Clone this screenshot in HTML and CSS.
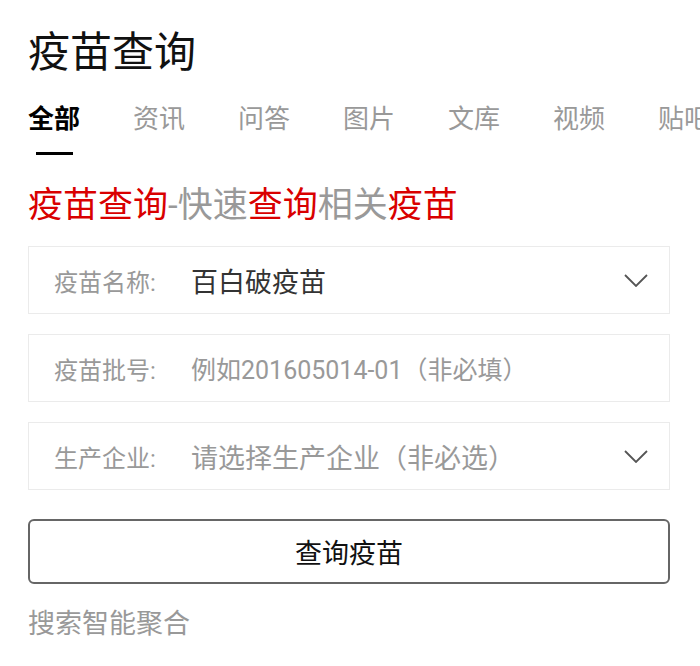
FILE: index.html
```html
<!DOCTYPE html>
<html lang="zh-CN">
<head>
    <meta charset="UTF-8">
    <meta name="viewport" content="width=device-width, initial-scale=1.0">
    <title>疫苗查询</title>
    <link rel="stylesheet" href="styles.css">
</head>
<body>
    <main class="pagina">
        <h1 class="titulo">疫苗查询</h1>

        <nav class="tabs">
            <a class="tab activo">全部<span class="linea"></span></a>
            <a class="tab">资讯</a>
            <a class="tab">问答</a>
            <a class="tab">图片</a>
            <a class="tab">文库</a>
            <a class="tab">视频</a>
            <a class="tab">贴吧</a>
        </nav>

        <h2 class="encabezado">
            <em>疫苗查询</em>-快速<em>查询</em>相关<em>疫苗</em>
        </h2>

        <section class="formulario">
            <div class="campo">
                <span class="etiqueta">疫苗名称:</span>
                <span class="valor">百白破疫苗</span>
                <svg class="flecha" width="24" height="13" viewBox="0 0 24 13">
                    <path d="M1 1 L12 12 L23 1" fill="none" stroke="#555" stroke-width="1.8"/>
                </svg>
            </div>
            <div class="campo">
                <span class="etiqueta">疫苗批号:</span>
                <span class="valor vacio pequeno">例如201605014-01（非必填）</span>
            </div>
            <div class="campo">
                <span class="etiqueta">生产企业:</span>
                <span class="valor vacio">请选择生产企业（非必选）</span>
                <svg class="flecha" width="24" height="13" viewBox="0 0 24 13">
                    <path d="M1 1 L12 12 L23 1" fill="none" stroke="#555" stroke-width="1.8"/>
                </svg>
            </div>
            <button class="boton">查询疫苗</button>
        </section>

        <p class="pie">搜索智能聚合</p>
    </main>
</body>
</html>
```

FILE: styles.css
```css
body {
    margin: 0;
    background-color: #fff;
    font-family: Roboto, "Noto Sans CJK SC", sans-serif;
    overflow: hidden;
}
.pagina {
    padding: 28px 30px 0 28px;
}
.titulo {
    margin: 0;
    font-size: 42px;
    font-weight: 400;
    line-height: 50px;
    color: #111;
}
.tabs {
    display: flex;
    gap: 53px;
    margin-top: 23px;
    white-space: nowrap;
    width: 800px;
}
.tab {
    display: flex;
    flex-direction: column;
    align-items: center;
    font-size: 26px;
    line-height: 36px;
    color: #999;
    flex-shrink: 0;
}
.activo {
    color: #000;
    font-weight: 700;
}
.linea {
    display: block;
    width: 37px;
    height: 3px;
    margin-top: 15px;
    background-color: #000;
}
.encabezado {
    margin: 29px 0 0 0;
    font-size: 35px;
    font-weight: 400;
    line-height: 44px;
    color: #999;
}
.encabezado em {
    font-style: normal;
    color: #d90000;
}
.formulario {
    display: flex;
    flex-direction: column;
    gap: 20px;
    margin-top: 18px;
    width: 642px;
}
.campo {
    display: flex;
    align-items: center;
    box-sizing: border-box;
    height: 68px;
    padding: 0 21px 0 25px;
    border: 1px solid #ebebeb;
}
.etiqueta {
    width: 137px;
    flex-shrink: 0;
    font-size: 24px;
    color: #999;
}
.valor {
    flex: 1;
    font-size: 27px;
    color: #333;
}
.vacio {
    color: #999;
}
.pequeno {
    font-size: 25px;
}
.flecha {
    flex-shrink: 0;
}
.boton {
    margin-top: 9px;
    height: 65px;
    border: 2px solid #666;
    border-radius: 6px;
    background-color: #fff;
    font-family: inherit;
    font-size: 27px;
    color: #111;
}
.pie {
    margin: 22px 0 0 0;
    font-size: 27px;
    line-height: 36px;
    color: #999;
}
```
